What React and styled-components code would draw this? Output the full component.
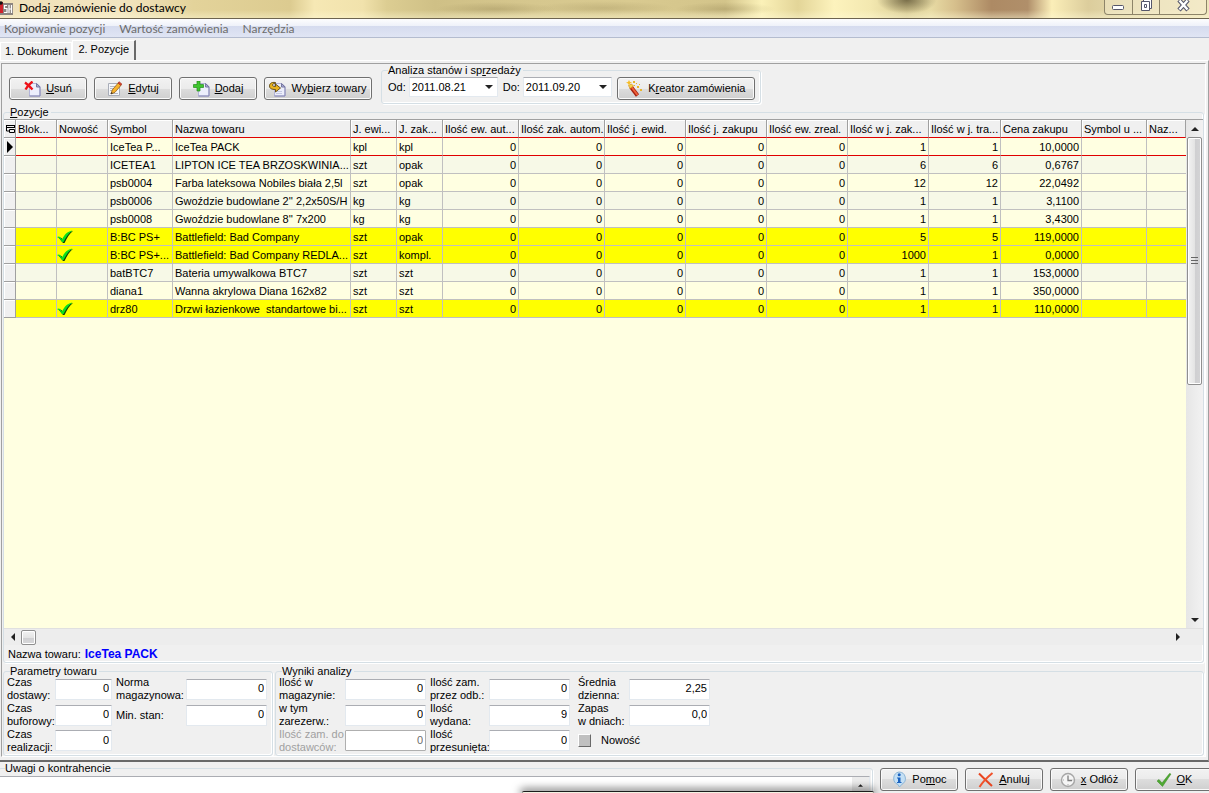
import React from "react";
import styled, { createGlobalStyle, css } from "styled-components";

const Global = createGlobalStyle`
  html, body, #root { height: 100%; margin: 0; }
  body { overflow: hidden; background: #f0f0f0; }
  *, *::before, *::after { box-sizing: border-box; }
  body, button, input, textarea, table { font: 11px/13px "Liberation Sans", Arial, sans-serif; color: #000; }
`;

const Window = styled.div`
  position: relative;
  display: flex;
  flex-direction: column;
  height: 100vh;
  overflow: hidden;
  background: #f0f0f0;
`;

/* ---------- title bar and menu ---------- */

const TitleBar = styled.header`
  display: flex;
  align-items: flex-start;
  height: 19px;
  overflow: hidden;
  border-bottom: 1px solid #6d6450;
  background:
    linear-gradient(180deg, transparent 55%, rgba(255, 250, 215, 0.45)),
    radial-gradient(ellipse 60px 7px at 41% 9px, rgba(120, 105, 60, 0.25), transparent),
    radial-gradient(ellipse 70px 7px at 50% 8px, rgba(120, 105, 60, 0.2), transparent),
    radial-gradient(ellipse 50px 7px at 60% 9px, rgba(120, 105, 60, 0.25), transparent),
    radial-gradient(ellipse 30px 14px at 75% 0, rgba(90, 80, 50, 0.75), transparent),
    linear-gradient(90deg, #efe0b8 0%, #f3e5c0 10%, #e3d39a 16%, #dccb90 24%, #f6e8b4 26%, #f1e2ac 30%,
      #dccd92 32%, #cfc086 36%, #d6c78e 44%, #d9ca90 52%, #d3c48a 60%, #fbf1b8 63%,
      #e3d598 66%, #fdf3bd 69%, #f3e8b0 72%, #d9cc94 75%, #e8dba4 77%, #d6bf8c 79%, #ad8a64 82%, #b08f6a 85%,
      #fbeeb8 87%, #dccd9c 90%, #e3d8ac 93%, #efe4bc 100%);
`;

const Title = styled.h1`
  flex: 1;
  margin: 0 0 0 6px;
  font: 12px/16px Lato, "Open Sans", sans-serif;
  white-space: nowrap;
`;

const WindowControls = styled.div`
  display: flex;
  height: 15px;
  margin-right: 2px;
  border: 1px solid #8d8469;
  border-top: 0;
  border-radius: 0 0 4px 4px;
  background: rgba(255, 250, 230, 0.3);
  overflow: hidden;
`;

const WindowButton = styled.button`
  width: ${(p) => p.$width}px;
  padding: 0;
  display: flex;
  justify-content: center;
  border: 0;
  border-right: 1px solid #8d8469;
  background: transparent;
  &:last-child { border-right: 0; }
`;

const MenuBar = styled.nav`
  display: flex;
  gap: 14px;
  height: 19px;
  padding: 0 4px;
  border-bottom: 1px solid #b4bccf;
  background: linear-gradient(180deg, #fdfdfe 0, #eef1f9 7px, #d5dbee 7px, #e0e5f4 100%);
`;

const MenuLink = styled.a`
  color: #6d6d6d;
  font: 12px/20px Lato, "Open Sans", sans-serif;
  text-decoration: none;
`;

/* ---------- tabs ---------- */

const Tabs = styled.div`
  display: flex;
  align-items: flex-end;
  height: 22px;
`;

const Tab = styled.button`
  padding: 0 4px;
  height: 18px;
  border: 1px solid #fff;
  border-bottom: 0;
  background: transparent;
  ${(p) => p.$active && css`
    height: 20px;
    padding: 0 5px 2px;
    border-right: 2px solid #696969;
  `}
`;

const TabPage = styled.main`
  flex: 1;
  min-height: 0;
  display: flex;
  flex-direction: column;
  padding: 2px 2px 3px 1px;
  border-top: 1px solid #fff;
  border-right: 1px solid #a0a0a0;
  border-bottom: 2px solid #696969;
`;

const Panel = styled.div`
  flex: 1;
  min-height: 0;
  display: flex;
  flex-direction: column;
  border: 1px solid #a0a0a0;
  border-right-color: #fff;
  border-bottom-color: #fff;
`;

/* ---------- generic controls ---------- */

const Button = styled.button`
  flex: none;
  display: flex;
  align-items: center;
  justify-content: center;
  gap: 5px;
  width: ${(p) => p.$width || 78}px;
  height: 23px;
  padding: 0;
  white-space: nowrap;
  border: 1px solid #707070;
  border-radius: 3px;
  box-shadow: inset 0 0 0 1px #fafafa;
  background: linear-gradient(180deg, #f2f2f2 0, #ebebeb 50%, #dddddd 50%, #cfcfcf 100%);
`;

const Group = styled.fieldset`
  min-width: 0;
  margin: 0;
  padding: 0;
  border: 1px solid #d5dfe5;
  border-radius: 3px;
  box-shadow: inset -1px -1px 0 #fff, 1px 1px 0 #fff;
`;

const Legend = styled.legend`
  margin-left: 6px;
  padding: 0 2px 0 0;
  line-height: 13px;
`;

/* ---------- toolbar ---------- */

const Toolbar = styled.div`
  display: flex;
  align-items: flex-start;
  height: 42px;
  padding: 0 7px;
`;

const ButtonRow = styled.div`
  display: flex;
  gap: 7px;
  padding-top: 13px;
`;

const DateGroup = styled(Group)`
  margin-left: 9px;
  height: 40px;
`;

const DateRow = styled.div`
  display: flex;
  align-items: flex-start;
  gap: 5px;
  padding: 0 5px 0 6px;
`;

const DateLabel = styled.label`
  display: flex;
  gap: 3px;
  line-height: 21px;
`;

const DateBox = styled.span`
  display: flex;
  align-items: center;
  width: 89px;
  height: 20px;
  padding-right: 4px;
  border: 1px solid #e3e9ef;
  border-top-color: #abadb3;
  background: #fff;
`;

const DateInput = styled.input`
  flex: 1;
  min-width: 0;
  padding: 0 0 0 2px;
  border: 0;
  background: transparent;
`;

/* ---------- grid ---------- */

const Positions = styled(Group)`
  flex: 1;
  min-height: 0;
  display: flex;
  flex-direction: column;
  margin: 0 1px 2px;
`;

const PositionsBody = styled.div`
  flex: 1;
  min-height: 0;
  display: flex;
  flex-direction: column;
`;

const GridArea = styled.div`
  flex: 1;
  min-height: 0;
  display: flex;
  border-top: 1px solid #a0a0a0;
  background: #ffffe1;
`;

const GridView = styled.div`
  flex: 1;
  min-width: 0;
  overflow: hidden;
`;

const Grid = styled.table`
  width: 1182px;
  table-layout: fixed;
  border-collapse: separate;
  border-spacing: 0;
`;

const cell = css`
  height: 18px;
  padding: 2px 2px 0;
  font-weight: normal;
  line-height: 15px;
  white-space: pre;
  overflow: hidden;
`;

const HeadCell = styled.th`
  ${cell}
  text-align: left;
  border-right: 1px solid #a0a0a0;
  border-bottom: 1px solid ${(p) => (p.$marker ? "#a0a0a0" : "#e00000")};
  box-shadow: inset 1px 1px 0 #fff;
  background: #f0f0f0;
`;

const Row = styled.tr`
  background: ${(p) => (p.$highlight ? "#ffff00" : p.$even ? "#f7f9e7" : "#ffffe1")};
`;

const Cell = styled.td`
  ${cell}
  ${(p) => p.$icon && "padding: 0;"}
  text-align: ${(p) => (p.$numeric ? "right" : "left")};
  border-right: 1px solid #c0c0c0;
  border-bottom: 1px solid ${(p) => (p.$current ? "#e00000" : "#c0c0c0")};
  &:last-child { border-right: 0; }
  svg { display: block; }
`;

const MarkerCell = styled.td`
  height: 18px;
  padding: 0 0 0 3px;
  border-right: 1px solid #a0a0a0;
  border-bottom: 1px solid #a0a0a0;
  box-shadow: inset 1px 1px 0 #fff;
  background: #f0f0f0;
  svg { display: block; }
`;

const VScroll = styled.div`
  flex: none;
  display: flex;
  flex-direction: column;
  align-items: center;
  justify-content: space-between;
  width: 17px;
  background: linear-gradient(90deg, #e6e6e6, #f2f2f2);
`;

const VThumb = styled.div`
  display: flex;
  align-items: center;
  justify-content: center;
  width: 15px;
  height: 248px;
  border: 1px solid #8f8f8f;
  border-radius: 2px;
  box-shadow: inset 0 0 0 1px #fff;
  background: linear-gradient(90deg, #f3f3f3 0, #e4e4e4 50%, #cfcfd1 50%, #d3d3d5 100%);
`;

const VTrack = styled.div`
  flex: 1;
`;

const ScrollArrow = styled.button`
  display: flex;
  align-items: center;
  justify-content: center;
  width: 17px;
  height: 17px;
  padding: 0;
  border: 0;
  background: transparent;
`;

const HScroll = styled.div`
  flex: none;
  display: flex;
  align-items: center;
  height: 17px;
  padding-right: 17px;
  border-top: 1px solid #e0e0e0;
  background: #ededed;
`;

const HThumb = styled.div`
  width: 15px;
  height: 15px;
  border: 1px solid #8f8f8f;
  border-radius: 2px;
  box-shadow: inset 0 0 0 1px #fff;
  background: linear-gradient(180deg, #f3f3f3 0, #e4e4e4 50%, #cfcfd1 50%, #d8d8da 100%);
`;

const Spacer = styled.div`
  flex: 1;
`;

const NameLine = styled.div`
  padding: 2px 4px 0;
  height: 17px;
  line-height: 14px;
`;

const ItemName = styled.strong`
  margin-left: 4px;
  color: #0000ff;
  font-size: 12px;
`;

/* ---------- details ---------- */

const Details = styled.div`
  flex: none;
  display: flex;
  gap: 2px;
  margin: 0 1px;
`;

const DetailGroup = styled(Group)`
  height: 91px;
  ${(p) => (p.$grow ? "flex: 1;" : "flex: none; width: 270px;")}
`;

const DetailColumns = styled.div`
  display: flex;
  align-items: flex-start;
  gap: 4px;
  margin-top: -2px;
  padding-left: 3px;
`;

const FieldGrid = styled.div`
  display: grid;
  grid-template-columns: ${(p) => p.$label}px ${(p) => p.$input}px;
  grid-template-rows: 26px 26px 25px;
  align-items: center;
  margin-left: ${(p) => p.$indent || 0}px;
`;

const FieldLabel = styled.label`
  white-space: pre;
  color: ${(p) => (p.$muted ? "#a0a0a0" : "#000")};
`;

const NumberInput = styled.input`
  position: relative;
  width: 100%;
  height: 21px;
  padding: 0 2px 2px;
  text-align: right;
  border: 1px solid #e3e9ef;
  border-top-color: #abadb3;
  border-radius: 1px;
  background: #fff;
  &:disabled { color: #6d6d6d; border-color: #afafaf; }
`;

const CheckLine = styled.label`
  grid-column: 1 / 3;
  display: flex;
  align-items: center;
  gap: 10px;
  height: 21px;
`;

const CheckBox = styled.input`
  appearance: none;
  width: 13px;
  height: 13px;
  margin: 0;
  border: 1px solid #fff;
  border-right-color: #696969;
  border-bottom-color: #696969;
  background: #c0c0c0;
`;

/* ---------- footer ---------- */

const Footer = styled.footer`
  flex: none;
  display: flex;
  height: 31px;
  overflow: hidden;
`;

const Notes = styled(Group)`
  flex: 1;
  height: 44px;
  margin-left: -2px;
`;

const NotesField = styled.div`
  display: flex;
  height: 30px;
  margin: 1px 2px 0 0;
  border: 1px solid #e3e9ef;
  border-top-color: #abadb3;
  background: #fff;
`;

const NotesText = styled.textarea`
  flex: 1;
  padding: 0;
  border: 0;
  resize: none;
  background: transparent;
`;

const NotesScroll = styled.div`
  width: 17px;
  background: #ececec;
`;

const FooterButtons = styled.div`
  display: flex;
  gap: 7px;
  padding: 6px 0 0 7px;
  margin-right: -4px;
`;

const PopupEdge = styled.div`
  position: absolute;
  left: 522px;
  bottom: 0;
  width: 352px;
  height: 2px;
  border-top: 1px solid #1c1c1c;
  border-radius: 3px 3px 0 0;
  background: #f4f1e2;
  box-shadow: 0 0 8px 2px rgba(0, 0, 0, 0.6);
`;

/* ---------- icons ---------- */

const Page = () => (
  <>
    <path d="M3.500 2.500h7.500l3 3v9.500h-10.500z" fill="#eceefb" stroke="#b3b4d8" />
    <path d="M3.500 15h10.500V6" fill="none" stroke="#8586b4" />
    <path d="M10.500 2.500v3.500h3.500z" fill="#a9aad6" stroke="#77789f" />
  </>
);

const DeleteIcon = () => (
  <svg width="17" height="16" viewBox="0 0 17 16">
    <g transform="translate(2 0)"><Page /></g>
    <path d="M1 1.500q4 3 7.500 7M8.500.5Q4 4 1.500 8.500" fill="none" stroke="#ee1018" strokeWidth="2.300" />
  </svg>
);

const EditIcon = () => (
  <svg width="16" height="16" viewBox="0 0 16 16">
    <path d="M1.500 2.500h11v12h-11z" fill="#f5f6f9" stroke="#a8adb8" />
    <path d="M3 5.500h7M3 7.500h6M3 9.500h4M3 12.500h8" stroke="#b5bac4" />
    <path d="M4 13l1.200-4 6-7 2.800 2.300-6 7z" fill="#f7b42c" stroke="#94601a" strokeWidth=".8" />
    <path d="M11 2l1-1.300 2.900 2.300-1 1.400z" fill="#e0452d" stroke="#9b2d1d" strokeWidth=".6" />
    <path d="M4 13l.5-2 1.300 1.200z" fill="#222" />
  </svg>
);

const AddIcon = () => (
  <svg width="17" height="16" viewBox="0 0 17 16">
    <g transform="translate(2 0)"><Page /></g>
    <path d="M4 0h3v3.500h3.500v3H7V10H4V6.500H.5v-3H4z" fill="#3fc62e" stroke="#23881b" strokeWidth=".7" />
  </svg>
);

const PickIcon = () => (
  <svg width="17" height="16" viewBox="0 0 17 16">
    <g transform="translate(2 0)"><Page /></g>
    <path d="M8 10.500h5M7 12.500h6" stroke="#c4c8e2" />
    <path d="M6.500 1.500C2 .8.500 3 .5 5c0 2.500 2 3.500 6 3.500V11l5-4-5-4v2.500C4.500 5.500 3.500 5 3.500 4s1-1.500 3-1.500z" fill="#e9b41f" stroke="#584410" strokeWidth=".9" />
  </svg>
);

const WandIcon = () => (
  <svg width="17" height="17" viewBox="0 0 17 17">
    <path d="M5 7l6.500 8.500" stroke="#a5200f" strokeWidth="4" />
    <path d="M5.500 7l6 8" stroke="#f0603a" strokeWidth="2" />
    <path d="M2.500 5.500l1.500 3 3.500-2.500-2-2z" fill="#f9d04a" stroke="#c98a1a" strokeWidth=".6" />
    <path d="M3 0l1 2 2 .5-2 1-1 2-1-2-2-1 2-.5z" fill="#f7bd24" />
    <path d="M7 1h2v2H7zM11 6h2v2h-2zM14 9h2v2h-2zM10 3h1v1h-1zM8 5h1v1H8zM13 4h1v1h-1z" fill="#e8b52c" />
  </svg>
);

const HelpIcon = () => (
  <svg width="16" height="17" viewBox="0 0 16 17">
    <path d="M8 1a6.500 6.500 0 0 1 3 12.200L8.500 16 7 13.500A6.500 6.500 0 0 1 8 1z" fill="#c4e0f5" stroke="#8db5d6" />
    <circle cx="8.200" cy="3.800" r="1.500" fill="#1c63c0" />
    <path d="M6 6.500h3.500v4.500h1v1H6v-1h1V7.500H6z" fill="#1c63c0" />
  </svg>
);

const CancelIcon = () => (
  <svg width="16" height="16" viewBox="0 0 16 16" fill="none">
    <path d="M1 1.500c4 4 8 8 13 12.500" stroke="#e8441f" strokeWidth="2" />
    <path d="M14.500 1C9 5.500 5 9.500 1.500 15" stroke="#f0522c" strokeWidth="2" />
  </svg>
);

const ClockIcon = () => (
  <svg width="16" height="16" viewBox="0 0 16 16" fill="none">
    <circle cx="8" cy="8" r="6.500" fill="#f5f5f5" stroke="#a6a6a6" strokeWidth="1.400" />
    <path d="M8 3.500V8.500H12" stroke="#7d7d7d" strokeWidth="1.300" />
    <path d="M8 12v1.500M3 8h1M12.500 8h1" stroke="#aaa" />
  </svg>
);

const OkIcon = () => (
  <svg width="16" height="16" viewBox="0 0 16 16">
    <path d="M1 9l2-1.500L6 11 13.500 1.500 15 2 6.500 14.500z" fill="#4ea832" stroke="#3a8a25" strokeWidth=".5" />
  </svg>
);

const TickIcon = () => (
  <svg width="17" height="14" viewBox="0 0 17 14">
    <path d="M1.500 7.500l3 .5 1.500 2C8.500 5 11 2.500 16 1 12 4 10 8 7.500 13H6z" fill="#0a3d0a" />
    <path d="M0 7q3-2 5 2.500C7.500 4.500 10 1.500 15.500.5 11 3.500 9 7.500 6.500 12H5Q3 8 0 7z" fill="#0be01c" />
  </svg>
);

const Arrow = ({ dir, size = 8 }) => {
  const shapes = {
    up: "M0 6l4-4 4 4z",
    down: "M0 2l4 4 4-4z",
    left: "M6 0L2 4l4 4z",
    right: "M2 0l4 4-4 4z",
  };
  return (
    <svg width={size} height={size} viewBox="0 0 8 8">
      <path d={shapes[dir]} fill="#222" />
    </svg>
  );
};

const AppIcon = () => (
  <svg width="13" height="15" viewBox="0 0 13 15">
    <rect y="3" width="13" height="12" fill="#8c8580" />
    <rect y="2" width="3" height="11" fill="#d0222b" />
    <circle cx="1" cy="3" r="1.800" fill="#111" />
    <path d="M7 5.500H4.500v3H7v4H4M9 5v8M11.500 5v8M9 9h2.500" fill="none" stroke="#fff" strokeWidth="1.200" />
  </svg>
);

/* ---------- data ---------- */

const columns = [
  ["Blok...", 41], ["Nowość", 51], ["Symbol", 65], ["Nazwa towaru", 178], ["J. ewi...", 46], ["J. zak...", 46],
  ["Ilość ew. aut...", 76], ["Ilość zak. autom.", 86], ["Ilość j. ewid.", 81], ["Ilość j. zakupu", 81],
  ["Ilość ew. zreal.", 81], ["Ilość w j. zak...", 81], ["Ilość w j. tra...", 72], ["Cena zakupu", 81],
  ["Symbol u ...", 65], ["Naz...", 39],
];

const items = [
  ["IceTea P...", "IceTea PACK", "kpl", "kpl", "1", "1", "10,0000"],
  ["ICETEA1", "LIPTON ICE TEA BRZOSKWINIA...", "szt", "opak", "6", "6", "0,6767"],
  ["psb0004", "Farba lateksowa Nobiles biała 2,5l", "szt", "opak", "12", "12", "22,0492"],
  ["psb0006", "Gwoździe budowlane 2'' 2,2x50S/H", "kg", "kg", "1", "1", "3,1100"],
  ["psb0008", "Gwoździe budowlane 8'' 7x200", "kg", "kg", "1", "1", "3,4300"],
  ["B:BC PS+", "Battlefield: Bad Company", "szt", "opak", "5", "5", "119,0000", true],
  ["B:BC PS+...", "Battlefield: Bad Company REDLA...", "szt", "kompl.", "1000", "1", "0,0000", true],
  ["batBTC7", "Bateria umywalkowa BTC7", "szt", "szt", "1", "1", "153,0000"],
  ["diana1", "Wanna akrylowa Diana 162x82", "szt", "szt", "1", "1", "350,0000"],
  ["drz80", "Drzwi łazienkowe  standartowe bi...", "szt", "szt", "1", "1", "110,0000", true],
];

const Field = ({ id, label, value, disabled }) => (
  <>
    <FieldLabel htmlFor={id} $muted={disabled}>{label}</FieldLabel>
    <NumberInput id={id} defaultValue={value} disabled={disabled} />
  </>
);

const ItemRow = ({ item, index }) => {
  const [symbol, name, unit, orderUnit, inOrder, inTransport, price, isNew] = item;
  const current = index === 0;
  const values = [symbol, name, unit, orderUnit, "0", "0", "0", "0", "0", inOrder, inTransport, price, "", ""];
  return (
    <Row $highlight={isNew} $even={index % 2 === 1}>
      <MarkerCell>
        {current && (
          <svg width="7" height="12" viewBox="0 0 7 12"><path d="M0 0l6 6-6 6z" /></svg>
        )}
      </MarkerCell>
      <Cell $current={current} />
      <Cell $current={current} $icon>{isNew && <TickIcon />}</Cell>
      {values.map((v, i) => (
        <Cell key={i} $current={current} $numeric={i > 3}>{v}</Cell>
      ))}
    </Row>
  );
};

export default function App() {
  return (
    <Window>
      <Global />
      <TitleBar>
        <AppIcon />
        <Title>Dodaj zamówienie do dostawcy</Title>
        <WindowControls>
          <WindowButton $width={28} aria-label="Minimalizuj">
            <svg width="13" height="12" viewBox="0 0 13 12"><rect x=".5" y="5.500" width="11" height="4" rx="1" fill="#fff" stroke="#55566a" /></svg>
          </WindowButton>
          <WindowButton $width={27} aria-label="Przywróć">
            <svg width="13" height="12" viewBox="0 0 13 12" fill="#fff" stroke="#55566a">
              <path d="M3.500-.5h8v9h-8z" /><path d="M1.500 1.500h8v9h-8z" /><path d="M4.500 4.500h2v3h-2z" />
            </svg>
          </WindowButton>
          <WindowButton $width={46} aria-label="Zamknij">
            <svg width="13" height="12" viewBox="0 0 13 12">
              <path d="M2 0l9 10M11 0L2 10" stroke="#55566a" strokeWidth="4.500" />
              <path d="M2.500.5l8 9M10.500.5l-8 9" stroke="#fff" strokeWidth="2.400" />
            </svg>
          </WindowButton>
        </WindowControls>
      </TitleBar>

      <MenuBar>
        <MenuLink href="#kopiowanie">Kopiowanie pozycji</MenuLink>
        <MenuLink href="#wartosc">Wartość zamówienia</MenuLink>
        <MenuLink href="#narzedzia">Narzędzia</MenuLink>
      </MenuBar>

      <Tabs>
        <Tab>1. Dokument</Tab>
        <Tab $active>2. Pozycje</Tab>
      </Tabs>

      <TabPage>
        <Panel>
          <Toolbar>
            <ButtonRow>
              <Button><DeleteIcon /><span><u>U</u>suń</span></Button>
              <Button><EditIcon /><span><u>E</u>dytuj</span></Button>
              <Button><AddIcon /><span><u>D</u>odaj</span></Button>
              <Button $width={108}><PickIcon /><span>Wy<u>b</u>ierz towary</span></Button>
            </ButtonRow>
            <DateGroup>
              <Legend>Analiza stanów i sp<u>r</u>zedaży</Legend>
              <DateRow>
                <DateLabel>Od:
                  <DateBox><DateInput defaultValue="2011.08.21" /><Arrow dir="down" /></DateBox>
                </DateLabel>
                <DateLabel>Do:
                  <DateBox><DateInput defaultValue="2011.09.20" /><Arrow dir="down" /></DateBox>
                </DateLabel>
                <Button $width={138}><WandIcon /><span>K<u>r</u>eator zamówienia</span></Button>
              </DateRow>
            </DateGroup>
          </Toolbar>

          <Positions>
            <Legend><u>P</u>ozycje</Legend>
            <PositionsBody>
              <GridArea>
                <GridView>
                  <Grid>
                    <colgroup>
                      <col style={{ width: 12 }} />
                      {columns.map(([name, width]) => <col key={name} style={{ width }} />)}
                    </colgroup>
                    <thead>
                      <tr>
                        <HeadCell $marker>
                          <svg width="9" height="9" viewBox="0 0 9 9" fill="none" stroke="#000">
                            <path d="M0 1.500h9M.5 1v6H4M8.500 1v3M0 3.500h9M3.500 5.500h5v3h-5z" />
                          </svg>
                        </HeadCell>
                        {columns.map(([name]) => <HeadCell key={name}>{name}</HeadCell>)}
                      </tr>
                    </thead>
                    <tbody>
                      {items.map((item, i) => <ItemRow key={i} item={item} index={i} />)}
                    </tbody>
                  </Grid>
                </GridView>
                <VScroll>
                  <ScrollArrow aria-label="W górę"><Arrow dir="up" /></ScrollArrow>
                  <VThumb>
                    <svg width="7" height="8" viewBox="0 0 7 8"><path d="M0 .5h7M0 3.500h7M0 6.500h7" stroke="#666" /></svg>
                  </VThumb>
                  <VTrack />
                  <ScrollArrow aria-label="W dół"><Arrow dir="down" /></ScrollArrow>
                </VScroll>
              </GridArea>
              <HScroll>
                <ScrollArrow aria-label="W lewo"><Arrow dir="left" /></ScrollArrow>
                <HThumb />
                <Spacer />
                <ScrollArrow aria-label="W prawo"><Arrow dir="right" /></ScrollArrow>
              </HScroll>
              <NameLine>Nazwa towaru:<ItemName>IceTea PACK</ItemName></NameLine>
            </PositionsBody>
          </Positions>

          <Details>
            <DetailGroup>
              <Legend>Parametry towaru</Legend>
              <DetailColumns>
                <FieldGrid $label={48} $input={57}>
                  <Field id="delivery" label={"Czas\ndostawy:"} value="0" />
                  <Field id="buffer" label={"Czas\nbuforowy:"} value="0" />
                  <Field id="lead" label={"Czas\nrealizacji:"} value="0" />
                </FieldGrid>
                <FieldGrid $label={70} $input={81}>
                  <Field id="norm" label={"Norma\nmagazynowa:"} value="0" />
                  <Field id="min" label="Min. stan:" value="0" />
                </FieldGrid>
              </DetailColumns>
            </DetailGroup>
            <DetailGroup $grow>
              <Legend>Wyniki analizy</Legend>
              <DetailColumns>
                <FieldGrid $label={66} $input={81}>
                  <Field id="stock" label={"Ilość w\nmagazynie:"} value="0" />
                  <Field id="reserved" label={"w tym\nzarezerw.:"} value="0" />
                  <Field id="ordered" label={"Ilość zam. do\ndostawców:"} value="0" disabled />
                </FieldGrid>
                <FieldGrid $label={59} $input={81}>
                  <Field id="demand" label={"Ilość zam.\nprzez odb.:"} value="0" />
                  <Field id="issued" label={"Ilość\nwydana:"} value="9" />
                  <Field id="moved" label={"Ilość\nprzesunięta:"} value="0" />
                </FieldGrid>
                <FieldGrid $label={51} $input={81} $indent={4}>
                  <Field id="average" label={"Średnia\ndzienna:"} value="2,25" />
                  <Field id="days" label={"Zapas\nw dniach:"} value="0,0" />
                  <CheckLine><CheckBox type="checkbox" />Nowość</CheckLine>
                </FieldGrid>
              </DetailColumns>
            </DetailGroup>
          </Details>
        </Panel>
      </TabPage>

      <Footer>
        <Notes>
          <Legend><label htmlFor="notes">Uwagi o kontrahencie</label></Legend>
          <NotesField>
            <NotesText id="notes" />
            <NotesScroll><ScrollArrow aria-label="W górę"><Arrow dir="up" size={5} /></ScrollArrow></NotesScroll>
          </NotesField>
        </Notes>
        <FooterButtons>
          <Button><HelpIcon /><span>Po<u>m</u>oc</span></Button>
          <Button><CancelIcon /><span><u>A</u>nuluj</span></Button>
          <Button><ClockIcon /><span><u>x</u> Odłóż</span></Button>
          <Button><OkIcon /><span><u>O</u>K</span></Button>
        </FooterButtons>
      </Footer>
      <PopupEdge />
    </Window>
  );
}
